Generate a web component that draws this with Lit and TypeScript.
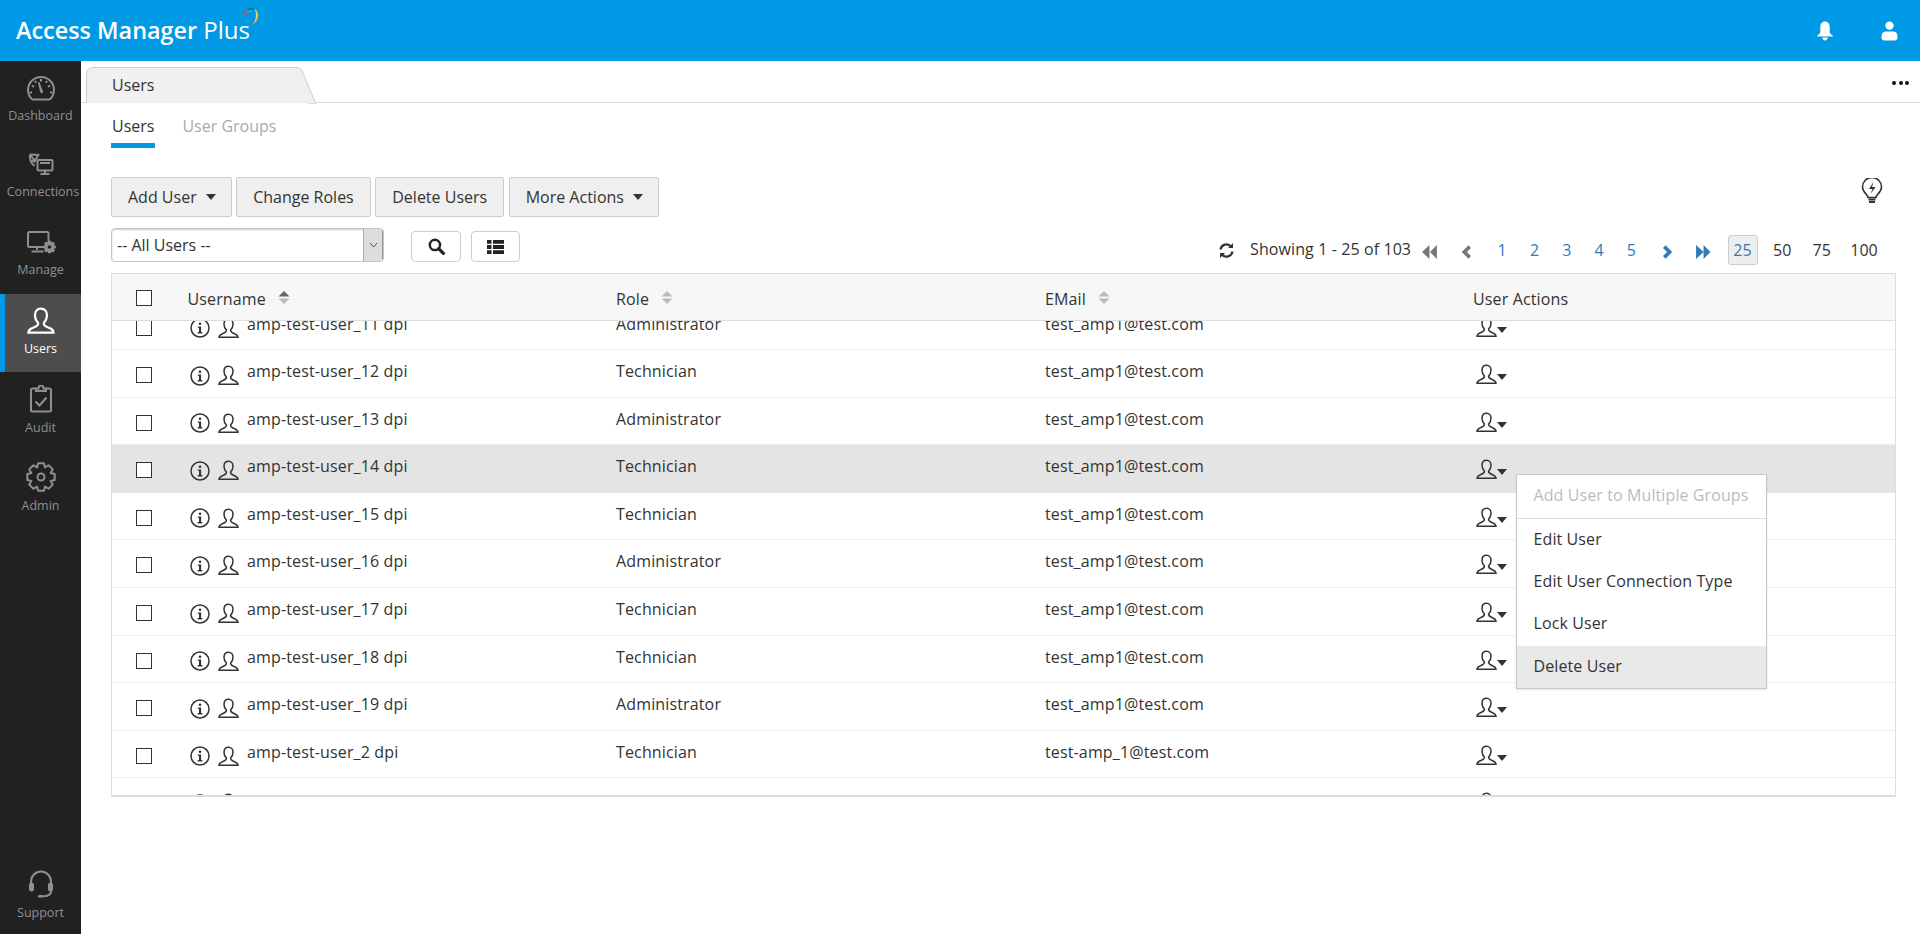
import { LitElement, html, css, svg } from "lit";
import { customElement } from "lit/decorators.js";

const gear = (cx: number, cy: number, ro: number, ri: number, n: number) => {
  const pts: string[] = [];
  for (let i = 0; i < n; i++) {
    const a = (i / n) * Math.PI * 2 - Math.PI / 2;
    const w = (Math.PI * 2) / n;
    const offs: [number, number][] = [
      [-0.5, ri], [-0.27, ro], [0.27, ro], [0.5, ri],
    ];
    for (const [o, r] of offs) {
      pts.push(`${(cx + Math.cos(a + o * w) * r).toFixed(2)} ${(cy + Math.sin(a + o * w) * r).toFixed(2)}`);
    }
  }
  return "M" + pts.join("L") + "Z";
};

const USER = "M10.5 1.2C7.6 1.2 6 3.4 6 6.2c0 2.4 1 4.4 2.4 5.8.2 1.6-.6 2.4-3 3.3C3 16.200 1 16.800 1 19.300h19c0-2.500-2-3.100-4.400-4-2.400-.9-3.200-1.700-3-3.300C14 10.600 15 8.600 15 6.200c0-2.800-1.600-5-4.500-5Z";

const userIcon = html`<svg class="ic-user" viewBox="0 0 21 20.500"><path d=${USER} /></svg>`;

const infoIcon = html`<svg class="ic-info" viewBox="0 0 20 20">
  <circle cx="10" cy="10" r="9" />
  <circle class="f" cx="10" cy="5.800" r="1.300" />
  <path class="f" d="M7.800 8.400h3.300v5.700h1.200v1.300H7.700v-1.300h1.300V9.700H7.800Z" />
</svg>`;

const sort = (active: boolean) => html`<svg class="sort" viewBox="0 0 12 15">
  <path d="M6 1 11.500 6.500H.5Z" fill=${active ? "#666" : "#bbb"} />
  <path d="M.5 8.500h11L6 14Z" fill="#bbb" />
</svg>`;

const navIcons: Record<string, unknown> = {
  dash: svg`
    <path d="M7 25.500h16c1 0 1.500-.5 2-1.300A13 13 0 1 0 5 24.200c.5.800 1 1.300 2 1.300Z" />
    <path d="M15 5v2.500M6 11.500l2 1.300M24 11.500l-2 1.300M3.500 18.500h2.500M24 18.500h2.500M9 7l1 1.800M21 7l-1 1.800" />
    <path class="f" d="M11.800 8.600l1.600-.5 3.600 9.300c.3 1-.3 1.600-1 1.800-.8.2-1.500-.2-1.700-1Z" />`,
  conn: svg`
    <rect x="11.500" y="9" width="15" height="10.500" rx="1" />
    <path d="M19 19.500v2.500M14.500 23h9M14 12h10" />
    <path d="M4 3.500c-.6 4 .8 8.500 4.500 11.500M4 3.500l9 .5M4 3.500 9.500 11M13 3 8 11.500M9.500 8 5 11" />`,
  manage: svg`
    <path d="M19 18H3.500C2.500 18 2 17.500 2 16.500v-12C2 3.500 2.500 3 3.500 3h17.500c1 0 1.500.5 1.500 1.500V12" />
    <path d="M11 18v3M5.500 22.500h12" />
    <path class="f" d=${gear(23.5, 18, 6.5, 4.800, 8)} />
    <circle class="hole" cx="23.500" cy="18" r="1.800" />`,
  users: svg`<path transform="translate(1 0) scale(1.330)" d=${USER} style="stroke-width:1.600" />`,
  audit: svg`
    <g transform="translate(0 -2)">
    <path d="M10 5.500H6.500C5.500 5.500 5 6 5 7v20c0 1 .5 1.500 1.500 1.500h17c1 0 1.500-.5 1.500-1.500V7c0-1-.5-1.500-1.500-1.500H20" />
    <path d="M10 8h10V5.500h-2.500C17.500 3.500 16.500 2.500 15 2.500s-2.500 1-2.500 3H10Z" />
    <path d="M9.500 18.500l4 4 7-8" style="stroke-width:2" />
    </g>`,
  admin: svg`
    <path d=${gear(15, 15, 14, 10.400, 8)} style="stroke-linejoin:round" />
    <circle cx="15" cy="15" r="3.500" />`,
  support: svg`
    <path d="M5 15v-2.500a10 10 0 0 1 20 0V15" />
    <rect class="f" x="3" y="13.500" width="5" height="9" rx="2.500" />
    <rect class="f" x="22" y="13.500" width="5" height="9" rx="2.500" />
    <path d="M25 22c0 3.500-3 5-7 5.300" />
    <rect class="f" x="12" y="26" width="6" height="2.600" rx="1.300" />`,
};

const nav = [
  ["dash", "Dashboard"],
  ["conn", "Connections"],
  ["manage", "Manage"],
  ["users", "Users"],
  ["audit", "Audit"],
  ["admin", "Admin"],
];

const rows: [string, string, string][] = [
  ["amp-test-user_11 dpi", "Administrator", "test_amp1@test.com"],
  ["amp-test-user_12 dpi", "Technician", "test_amp1@test.com"],
  ["amp-test-user_13 dpi", "Administrator", "test_amp1@test.com"],
  ["amp-test-user_14 dpi", "Technician", "test_amp1@test.com"],
  ["amp-test-user_15 dpi", "Technician", "test_amp1@test.com"],
  ["amp-test-user_16 dpi", "Administrator", "test_amp1@test.com"],
  ["amp-test-user_17 dpi", "Technician", "test_amp1@test.com"],
  ["amp-test-user_18 dpi", "Technician", "test_amp1@test.com"],
  ["amp-test-user_19 dpi", "Administrator", "test_amp1@test.com"],
  ["amp-test-user_2 dpi", "Technician", "test-amp_1@test.com"],
  ["", "", ""],
];

@customElement("app-root")
export class AppRoot extends LitElement {
  static styles = css`
    :host {
      display: flex;
      flex-direction: column;
      height: 934px;
      overflow: hidden;
      font-family: "Open Sans", sans-serif;
      font-size: 16px;
      color: #333;
      background: #fff;
    }
    .top {
      height: 61px;
      flex: none;
      background: #0099e6;
      display: flex;
      align-items: center;
      color: #fff;
    }
    .logo {
      position: relative;
      margin-left: 16px;
      font-size: 23.400px;
      font-weight: 600;
      line-height: 30px;
      margin-top: -1px;
    }
    .logo span { font-weight: 400; font-size: 24px; }
    .logo svg { position: absolute; left: 226px; top: -7px; width: 19px; height: 18px; fill: none; }
    .top-ic { margin-left: auto; display: flex; align-items: center; margin-right: 22px; gap: 48px; }
    .top-ic svg { fill: #fff; display: block; }
    .main { flex: 1; display: flex; min-height: 0; }
    .side {
      width: 81px;
      flex: none;
      background: #212121;
      display: flex;
      flex-direction: column;
    }
    .nav {
      height: 77.75px;
      flex: none;
      box-sizing: border-box;
      padding-top: 12.500px;
      display: flex;
      flex-direction: column;
      align-items: center;
      color: #8f8f8f;
      font-size: 12.500px;
      line-height: 16px;
    }
    .nav svg {
      width: 30px;
      height: 30px;
      fill: none;
      stroke: #8f8f8f;
      stroke-width: 2;
      margin-bottom: 3.500px;
      flex: none;
    }
    .nav svg .f { fill: #8f8f8f; stroke: none; }
    .nav svg .hole { fill: #212121; stroke: none; }
    .nav.on {
      background: #4d4d4d;
      color: #fff;
      border-left: 5px solid #0099e6;
      padding-right: 5px;
    }
    .nav.on svg { stroke: #fff; }
    .nav.dash span { margin-top: 1px; }
    .nav.conn span { margin-left: 5px; margin-top: -1px; white-space: nowrap; }
    .nav.manage span { margin-top: -1px; }
    .nav.users span { margin-top: 1px; }
    .nav.audit span { margin-top: 2px; }
    .nav.admin span { margin-top: 2px; }
    .nav.support { margin-top: auto; height: 78px; }
    .nav.support span { margin-top: 3px; }
    .content { flex: 1; min-width: 0; }
    .tabbar {
      height: 42px;
      box-sizing: border-box;
      border-bottom: 1px solid #ddd;
      display: flex;
      align-items: flex-end;
      padding-left: 5px;
      position: relative;
    }
    .tab {
      position: relative;
      width: 231px;
      height: 36px;
      margin-bottom: -1px;
      padding-left: 26px;
      box-sizing: border-box;
      line-height: 36px;
    }
    .tab svg { position: absolute; left: 0; top: 0; width: 231px; height: 37px; }
    .tab span { position: relative; }
    .dots { position: absolute; right: 11px; top: 20px; display: flex; gap: 2.500px; }
    .dots i { width: 4px; height: 4px; border-radius: 50%; background: #111; }
    .body { padding: 0 24.500px 0 30px; }
    .subtabs { display: flex; height: 45px; align-items: flex-start; gap: 26px; }
    .subtabs div { box-sizing: border-box; padding: 13px 1px 0; height: 45px; line-height: 20px; color: #aaa; }
    .subtabs .on { color: #333; border-bottom: 5px solid #0099e6; }
    .toolbar { margin-top: 29px; display: flex; gap: 4.500px; align-items: flex-start; }
    .btn {
      height: 40px;
      box-sizing: border-box;
      padding: 0 16px;
      background: #efefef;
      border: 1px solid #ccc;
      border-radius: 2px;
      display: flex;
      align-items: center;
      line-height: 20px;
    }
    .btn.dd { padding-right: 15px; }
    .btn .caret { border-left-width: 5.500px; border-right-width: 5.500px; margin-left: 9px; }
    .caret {
      width: 0;
      height: 0;
      border-left: 6px solid transparent;
      border-right: 6px solid transparent;
      border-top: 6px solid #333;
      margin-left: 10px;
    }
    .bulb { margin-left: auto; margin-right: 13px; margin-top: 1px; width: 22px; height: 26px; fill: none; stroke: #333; stroke-width: 1.600; }
    .filter { margin-top: 11px; display: flex; height: 34px; align-items: flex-start; }
    .select {
      width: 273px;
      height: 34px;
      box-sizing: border-box;
      border: 1px solid #c4c4c4;
      border-radius: 4px;
      box-shadow: inset 0 1px 2px #ccc;
      display: flex;
      align-items: center;
      padding-left: 5px;
      overflow: hidden;
      justify-content: space-between;
    }
    .sel-arrow {
      width: 20px;
      height: 32px;
      background: #ddd;
      border-left: 1px solid #aaa;
      border-right: 1px solid #999;
      box-sizing: border-box;
      display: flex;
      align-items: center;
      justify-content: center;
    }
    .sel-arrow svg { width: 9px; height: 6px; fill: none; stroke: #555; stroke-width: 1; }
    .ibtn {
      height: 31px;
      box-sizing: border-box;
      border: 1px solid #ccc;
      border-radius: 4px;
      margin-top: 3px;
      display: flex;
      align-items: center;
      justify-content: center;
      background: #fff;
    }
    .ibtn.s { width: 50px; margin-left: 27px; }
    .ibtn.l { width: 49px; margin-left: 10px; }
    .pager { margin-left: auto; display: flex; align-items: center; margin-top: 7px; height: 30px; line-height: 20px; position: relative; }
    .pager .ref { width: 15px; height: 17px; margin-right: 16px; fill: none; stroke: #333; stroke-width: 2.200; }
    .pager .lbl { width: 164px; white-space: nowrap; margin-top: -3px; letter-spacing: .1px; }
    .pg { width: 32.300px; text-align: center; color: #337ab7; flex: none; }
    .pg.w { width: 39.700px; }
    .pg svg { display: inline-block; vertical-align: middle; height: 14px; }
    .size { flex: none; text-align: center; color: #333; }
    .size.on { width: 30px; height: 30px; box-sizing: border-box; border: 1px solid #ccc; border-radius: 3px; background: #eee; color: #337ab7; line-height: 29px; margin: 0 5px 0 8px; }
    .size.m { width: 39.500px; }
    .size.e { width: 45px; margin-right: 9px; }
    .table {
      margin-top: 11px;
      height: 524px;
      box-sizing: border-box;
      border: 1px solid #ddd;
      border-bottom-width: 2px;
      display: flex;
      flex-direction: column;
      overflow: hidden;
      letter-spacing: .14px;
    }
    .grid { display: grid; grid-template-columns: 75.5px 428.5px 429px 428px 1fr; }
    .head {
      height: 47px;
      flex: none;
      box-sizing: border-box;
      padding-top: 3px;
      background: #f7f7f7;
      border-bottom: 1px solid #ddd;
      align-items: center;
      line-height: 20px;
    }
    .head > div { display: flex; align-items: center; }
    .head .cb { margin-top: -2px; }
    .sort { width: 12px; height: 15px; margin-left: 12px; margin-top: -3px; }
    .cb { width: 16px; height: 16px; box-sizing: border-box; border: 1.500px solid #333; background: #fff; margin-left: 24px; }
    .scroll { flex: 1; overflow: hidden; min-height: 0; }
    .rows { margin-top: -18.500px; }
    .row {
      height: 47.600px;
      box-sizing: border-box;
      border-bottom: 1.500px solid #eee;
      position: relative;
      line-height: 20px;
    }
    .row.hi { background: #e4e4e4; z-index: 1; border-bottom: 0; }
    .row > div { padding-top: 11px; }
    .row .cbc { padding-top: 17px; }
    .row .u { display: flex; padding-left: 2.500px; }
    .ic-info { width: 20px; height: 20px; margin-top: 4.500px; fill: none; stroke: #333; stroke-width: 1.500; flex: none; }
    .ic-info .f { fill: #333; stroke: none; }
    .ic-user { width: 21px; height: 20.500px; fill: none; stroke: #333; stroke-width: 1.500; flex: none; }
    .row .u .ic-user { margin: 4px 8px 0 8px; }
    .row .a { display: flex; padding-left: 3px; align-items: flex-start; }
    .row .a .ic-user { margin-top: 3px; }
    .row .a .caret { margin: 13px 0 0 0; border-left-width: 5.500px; border-right-width: 5.500px; }
    .menu {
      position: absolute;
      left: 1403.500px;
      top: 28.500px;
      width: 251px;
      background: #fff;
      border: 1px solid #c8c8c8;
      box-shadow: 0 1px 2px rgba(0,0,0,.1);
      padding: 0 !important;
      z-index: 2;
      box-sizing: border-box;
      letter-spacing: .1px;
    }
    .menu div { height: 42.300px; padding-left: 17px; line-height: 41px; }
    .menu .dis { color: #bbb; border-bottom: 1px solid #ddd; height: 43px; }
    .menu .hov { background: #e9e9e9; }
  `;

  render() {
    return html`
      <div class="top">
        <div class="logo">Access Manager <span>Plus</span>
          <svg viewBox="0 0 19 18">
            <path d="M1 8A6.500 6.500 0 0 1 5 3.800" stroke="#e0483f" stroke-width="1.500" />
            <path d="M5 3.800A7 7 0 0 1 10 3.500" stroke="#44b35c" stroke-width="1.500" />
            <path d="M5.500 1.500A8.500 8.500 0 0 1 12 1.500" stroke="#1467a8" stroke-width="1.500" />
            <path d="M12 .5C17 3 18.500 11 10.500 17C14.500 11 15 5 12 .5Z" fill="#f2c831" />
          </svg>
        </div>
        <div class="top-ic">
          <svg width="16" height="20" viewBox="0 0 16 20"><path d="M8 .5c3 0 4.700 2.300 4.700 5.500v5c0 1.500 1.300 2.300 3 3.500v1H.3v-1c1.700-1.200 3-2 3-3.500V6C3.300 2.800 5 .5 8 .5Z" /><path d="M5.200 16.500h5.600C10.500 18.300 9.400 19.500 8 19.500s-2.500-1.200-2.800-3Z" /></svg>
          <svg width="17" height="20" viewBox="0 0 17 20"><circle cx="8.500" cy="4.600" r="4.200" /><path d="M5 10.500h7c2.800 0 4.500 1.800 4.500 4.500v1.500c0 1.800-1.200 3-3 3h-10c-1.800 0-3-1.200-3-3V15c0-2.700 1.700-4.500 4.500-4.500Z" /></svg>
        </div>
      </div>
      <div class="main">
        <div class="side">
          ${nav.map(
            ([k, l]) => html`<div class="nav ${k} ${k === "users" ? "on" : ""}">
              <svg viewBox="0 0 30 30">${navIcons[k]}</svg><span>${l}</span>
            </div>`
          )}
          <div class="nav support"><svg viewBox="0 0 30 30">${navIcons.support}</svg><span>Support</span></div>
        </div>
        <div class="content">
          <div class="tabbar">
            <div class="tab">
              <svg viewBox="0 0 231 37"><path d="M.5 37V8C.5 3 3 .5 8 .5H211c3 0 4.500 1.500 5.500 4.500L230 37Z" fill="#f0f0f0" stroke="#ccc" /><path d="M0 36.500H221" stroke="#fff" /></svg>
              <span>Users</span>
            </div>
            <div class="dots"><i></i><i></i><i></i></div>
          </div>
          <div class="body">
            <div class="subtabs"><div class="on">Users</div><div>User Groups</div></div>
            <div class="toolbar">
              <div class="btn dd">Add User<i class="caret"></i></div>
              <div class="btn">Change Roles</div>
              <div class="btn">Delete Users</div>
              <div class="btn dd">More Actions<i class="caret"></i></div>
              <svg class="bulb" viewBox="0 0 22 26">
                <path d="M7 19.500c0-3-5.500-5-5.500-10.500a9.500 9.500 0 0 1 19 0c0 5.500-5.500 7.500-5.500 10.500Z" />
                <path d="M12.500 4 8 11h3.500l-2 5 5-7H11Z" fill="#333" stroke="none" />
                <path d="M7.500 21.500h7M8 24h6" stroke-width="2" />
              </svg>
            </div>
            <div class="filter">
              <div class="select"><span>-- All Users --</span>
                <div class="sel-arrow"><svg viewBox="0 0 9 6"><path d="M1 1l3.500 4L8 1" /></svg></div>
              </div>
              <div class="ibtn s"><svg width="17" height="17" viewBox="0 0 16 16"><circle cx="6.500" cy="6.500" r="4.800" fill="none" stroke="#222" stroke-width="2.300" /><path d="M10 10l4.500 4.500" stroke="#222" stroke-width="3" stroke-linecap="round" /></svg></div>
              <div class="ibtn l"><svg width="17" height="14" viewBox="0 0 17 14"><path fill="#222" d="M0 0h4.500v3.800H0ZM6 0h11v3.800H6ZM0 5.100h4.500v3.800H0ZM6 5.100h11v3.800H6ZM0 10.200h4.500V14H0ZM6 10.200h11V14H6Z" /></svg></div>
              <div class="pager">
                <svg class="ref" viewBox="0 0 15 17"><path d="M1.500 7.500A6 6 0 0 1 12 4.500" /><path d="M13.500 9.500A6 6 0 0 1 3 12.500" /><path d="M14 1v5H9ZM1 16v-5h5Z" fill="#333" stroke="none" /></svg>
                <span class="lbl">Showing 1 - 25 of 103</span>
                <span class="pg"><svg viewBox="0 0 15 13" width="16"><path fill="#777" d="M7 0v13L0 6.500ZM14 0v13L7.500 6.500Z" /></svg></span>
                <span class="pg w"><svg viewBox="0 0 10 13" width="11"><path fill="none" stroke="#777" stroke-width="3.400" d="M8 1.500 3 6.500l5 5" /></svg></span>
                ${[1, 2, 3, 4, 5].map((n) => html`<span class="pg">${n}</span>`)}
                <span class="pg w"><svg viewBox="0 0 10 13" width="11"><path fill="none" stroke="#337ab7" stroke-width="3.400" d="M2 1.500l5 5-5 5" /></svg></span>
                <span class="pg"><svg viewBox="0 0 15 13" width="16"><path fill="#337ab7" d="M1 0v13l7-6.500ZM8 0v13l6.500-6.500Z" /></svg></span>
                <span class="size on">25</span>
                <span class="size m">50</span>
                <span class="size m">75</span>
                <span class="size e">100</span>
              </div>
            </div>
            <div class="table">
              <div class="grid head">
                <div><i class="cb"></i></div>
                <div>Username ${sort(true)}</div>
                <div>Role ${sort(false)}</div>
                <div>EMail ${sort(false)}</div>
                <div>User Actions</div>
              </div>
              <div class="scroll">
                <div class="rows">
                  ${rows.map(
                    (r, i) => html`<div class="grid row ${i === 3 ? "hi" : ""}">
                      <div class="cbc"><i class="cb" style="display:block"></i></div>
                      <div class="u">${infoIcon}${userIcon}<span>${r[0]}</span></div>
                      <div>${r[1]}</div>
                      <div>${r[2]}</div>
                      <div class="a">${userIcon}<i class="caret"></i></div>
                      ${i === 3
                        ? html`<div class="menu">
                            <div class="dis">Add User to Multiple Groups</div>
                            <div>Edit User</div>
                            <div>Edit User Connection Type</div>
                            <div>Lock User</div>
                            <div class="hov">Delete User</div>
                          </div>`
                        : ""}
                    </div>`
                  )}
                </div>
              </div>
            </div>
          </div>
        </div>
      </div>
    `;
  }
}
